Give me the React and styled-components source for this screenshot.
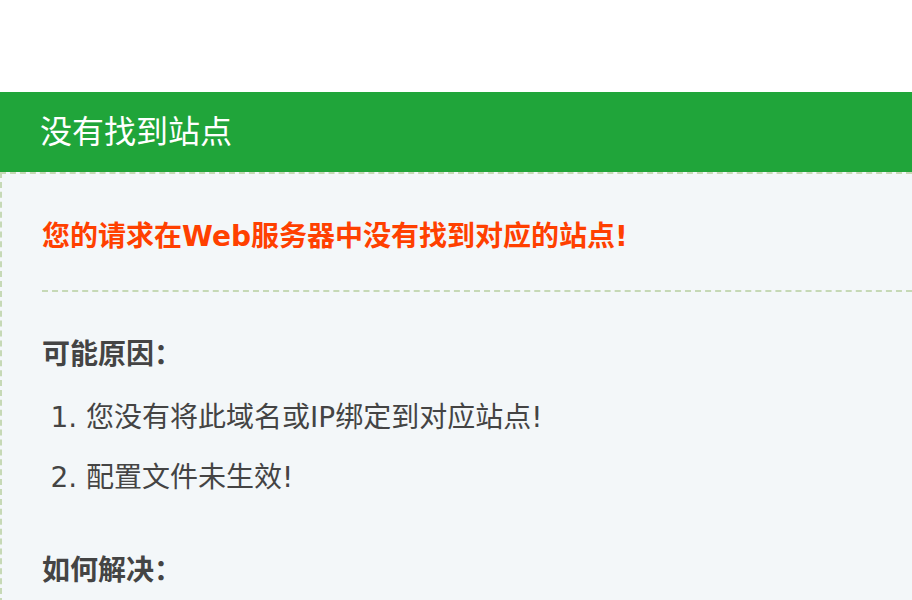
import React from "react";
import styled, { createGlobalStyle } from "styled-components";

const Global = createGlobalStyle`
  * { margin: 0; padding: 0; box-sizing: border-box; }
  html, body { background: #fff; overflow: hidden; height: 600px; }
  body {
    font-family: "DejaVu Sans", "Noto Sans CJK SC", sans-serif;
    font-size: 28px;
    color: #444;
  }
`;

const Main = styled.div`
  width: 100%;
  height: 508px;
  margin: 92px 0 0 0;
  display: flex;
  flex-direction: column;
  overflow: hidden;
`;

const Title = styled.div`
  background: #20a53a;
  color: #fff;
  font-size: 32px;
  height: 80px;
  line-height: 80px;
  padding-left: 40px;
  flex: none;
`;

const Content = styled.div`
  background-color: #f3f7f9;
  flex: 1;
  border: 2px dashed #c6d9b6;
  border-right: none;
  border-bottom: none;
  padding: 40px 0 0 40px;
`;

const Alert = styled.p`
  border-bottom: 2px dashed #c6d9b6;
  color: #ff4000;
  font-weight: bold;
  margin: 0 0 40px;
  padding-bottom: 36px;
`;

const Heading = styled.p`
  margin-bottom: 16px;
  font-weight: bold;
  color: #444;
`;

const List = styled.ol`
  margin: 0 0 40px 44px;
  padding: 0;
  color: #444;
  li { line-height: 60px; }
`;

export default function App() {
  return (
    <>
      <Global />
      <Main>
        <Title>没有找到站点</Title>
        <Content>
          <Alert>您的请求在Web服务器中没有找到对应的站点!</Alert>
          <Heading>可能原因：</Heading>
          <List>
            <li>您没有将此域名或IP绑定到对应站点!</li>
            <li>配置文件未生效!</li>
          </List>
          <Heading>如何解决：</Heading>
        </Content>
      </Main>
    </>
  );
}
